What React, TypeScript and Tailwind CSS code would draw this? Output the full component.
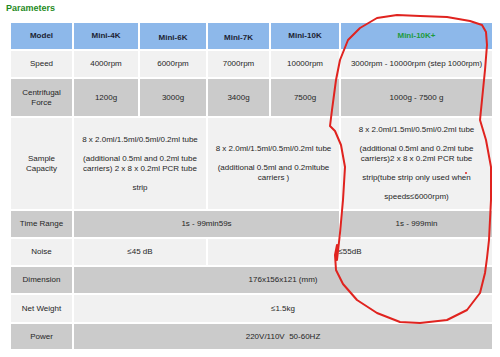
import React from 'react';

const light = 'bg-[#f1f1f1]';
const grey = 'bg-[#cbcbcb]';
const blue = 'bg-[#8db8ea]';

// red hand-drawn loop around the Mini-10K+ column
const loop = [
  [337, 260], [340, 233], [343, 200], [345, 167], [341, 145], [335, 131], [330, 126],
  [332, 110], [334, 95], [336, 80], [340, 60], [348, 40], [360, 28], [377, 18], [397, 15],
  [420, 16], [447, 17], [470, 21], [482, 25], [486, 32], [487, 45], [485, 70], [482, 100],
  [480, 120], [486, 140], [491, 167], [491, 200], [489, 240], [487, 258], [485, 273],
  [480, 293], [467, 310], [447, 320], [420, 323], [400, 322], [377, 313], [357, 300],
  [343, 284], [336, 270], [335, 255], [337, 245],
];

function Cell({
  children,
  className = '',
}: {
  children?: React.ReactNode;
  className?: string;
}) {
  return (
    <div className={`flex items-center justify-center text-center ${className}`}>
      {children}
    </div>
  );
}

export default function App() {
  return (
    <div
      className="relative w-[500px] h-[357px] bg-white text-[8px] leading-[10px] text-[#262626]"
      style={{ fontFamily: '"Liberation Sans", Arial, sans-serif' }}
    >
      <div className="pl-[6px] pt-[3px] h-[23px] text-[9px] leading-[11px] font-bold text-[#1f8a24]">
        Parameters
      </div>

      <div className="ml-[11px] grid grid-cols-[61px_64px_66px_61px_68px_151px] grid-rows-[26px_26px_37px_91px_26px_26px_26px_27px_25px] gap-[2px]">
        {/* header */}
        <Cell className={`${blue} font-bold text-[#1c2333]`}>Model</Cell>
        <Cell className={`${blue} font-bold text-[#1c2333]`}>Mini-4K</Cell>
        <Cell className={`${blue} font-bold text-[#1c2333] pt-[3px]`}>Mini-6K</Cell>
        <Cell className={`${blue} font-bold text-[#1c2333] pt-[3px]`}>Mini-7K</Cell>
        <Cell className={`${blue} font-bold text-[#1c2333]`}>Mini-10K</Cell>
        <Cell className={`${blue} font-bold text-[#1d9a3c]`}>Mini-10K+</Cell>

        {/* speed */}
        <Cell className={light}>Speed</Cell>
        <Cell className={light}>4000rpm</Cell>
        <Cell className={light}>6000rpm</Cell>
        <Cell className={light}>7000rpm</Cell>
        <Cell className={light}>10000rpm</Cell>
        <Cell className={`${light} whitespace-nowrap`}>3000rpm - 10000rpm (step 1000rpm)</Cell>

        {/* centrifugal force */}
        <Cell className={grey}>
          Centrifugal
          <br />
          Force
        </Cell>
        <Cell className={grey}>1200g</Cell>
        <Cell className={grey}>3000g</Cell>
        <Cell className={grey}>3400g</Cell>
        <Cell className={grey}>7500g</Cell>
        <Cell className={grey}>1000g - 7500 g</Cell>

        {/* sample capacity */}
        <Cell className={light}>
          Sample
          <br />
          Capacity
        </Cell>
        <Cell className={`${light} col-span-2 flex-col gap-[9px] whitespace-nowrap`}>
          <div>8 x 2.0ml/1.5ml/0.5ml/0.2ml tube</div>
          <div>
            (additional 0.5ml and 0.2ml tube
            <br />
            carriers) 2 x 8 x 0.2ml PCR tube
          </div>
          <div>strip</div>
        </Cell>
        <Cell className={`${light} col-span-2 flex-col gap-[9px] whitespace-nowrap`}>
          <div>8 x 2.0ml/1.5ml/0.5ml/0.2ml tube</div>
          <div>
            (additional 0.5ml and 0.2mltube
            <br />
            carriers )
          </div>
        </Cell>
        <Cell className={`${light} flex-col gap-[9px] whitespace-nowrap`}>
          <div>8 x 2.0ml/1.5ml/0.5ml/0.2ml tube</div>
          <div>
            (additional 0.5ml and 0.2ml tube
            <br />
            carriers)2 x 8 x 0.2ml PCR tube
          </div>
          <div>strip(tube strip only used when</div>
          <div>speeds≤6000rpm)</div>
        </Cell>

        {/* time range */}
        <Cell className={grey}>Time Range</Cell>
        <Cell className={`${grey} col-span-4`}>1s - 99min59s</Cell>
        <Cell className={grey}>1s - 999min</Cell>

        {/* noise */}
        <Cell className={light}>Noise</Cell>
        <Cell className={`${light} col-span-2`}>≤45 dB</Cell>
        <Cell className={`${light} col-span-3`}>≤55dB</Cell>

        {/* dimension */}
        <Cell className={grey}>Dimension</Cell>
        <Cell className={`${grey} col-span-5`}>176x156x121 (mm)</Cell>

        {/* net weight */}
        <Cell className={light}>Net Weight</Cell>
        <Cell className={`${light} col-span-5`}>≤1.5kg</Cell>

        {/* power */}
        <Cell className={grey}>Power</Cell>
        <Cell className={`${grey} col-span-5 whitespace-pre`}>220V/110V  50-60HZ</Cell>
      </div>

      <svg
        className="absolute inset-0 pointer-events-none"
        width={500}
        height={357}
        viewBox="0 0 500 357"
      >
        <polygon
          points={loop.map((p) => p.join(',')).join(' ')}
          fill="none"
          stroke="#e0231f"
          strokeWidth={2}
          strokeLinejoin="round"
        />
        <circle cx={466} cy={173} r={1} fill="#e0231f" />
      </svg>
    </div>
  );
}
